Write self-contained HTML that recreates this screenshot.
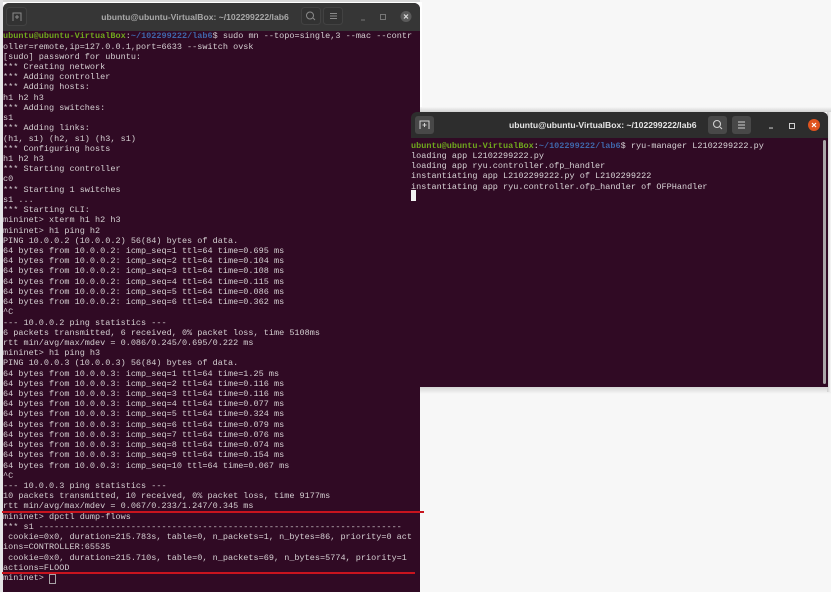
<!DOCTYPE html>
<html><head><meta charset="utf-8">
<style>
html,body{margin:0;padding:0;background:#fff;width:831px;height:592px;overflow:hidden}
.win{position:absolute;overflow:hidden;background:#300a24}
.bar{position:absolute;left:0;top:0;right:0}
.title{position:absolute;left:-33px;right:0;text-align:center;font:bold 8.6px/1 "Liberation Sans",sans-serif;filter:blur(.25px)}
pre{position:absolute;margin:0;font-family:"Liberation Mono",monospace;font-size:8.5px;letter-spacing:.012px;line-height:10.226px;color:#d4cfd1;filter:blur(.35px)}
.g{color:#6fa81e;font-weight:bold}.b{color:#3f66a8;font-weight:bold}
svg{position:absolute;left:0;top:0}
.red{position:absolute;background:#c8141e;height:1.5px}
</style></head><body>
<div style="position:absolute;left:0;top:0;width:831px;height:2px;background:#d8d8d8"></div>
<div style="position:absolute;left:0;top:0;width:3px;height:592px;background:#e4e4e6"></div>
<div style="position:absolute;left:420px;top:0;width:411px;height:592px;background:#f7f7f7"></div>
<div style="position:absolute;left:420px;top:2px;width:2px;height:105px;background:#fff"></div>

<div class="win" style="left:3px;top:3px;width:417px;height:589px;border-radius:6px 6px 0 0">
<div class="bar" style="height:27.5px;background:#363636"></div>
<div class="title" style="top:10px;color:#a8a8a8">ubuntu@ubuntu-VirtualBox: ~/102299222/lab6</div>
<svg width="417" height="28">
<rect x="3.5" y="4.5" width="20" height="18" rx="3" fill="#323232" stroke="#424242"/>
<path d="M10 18V10H18V18M14 12V16M12 14H16" fill="none" stroke="#8a8a8a"/>
<rect x="298.5" y="4.5" width="19" height="17" rx="3" fill="#323232" stroke="#424242"/>
<circle cx="307" cy="12.5" r="3.5" fill="none" stroke="#8a8a8a"/><path d="M310 15L312 17" stroke="#8a8a8a"/>
<rect x="320.5" y="4.5" width="19" height="17" rx="3" fill="#323232" stroke="#424242"/>
<path d="M327 10.5H334M327 13H334M327 15.5H334" stroke="#8a8a8a"/>
<path d="M358 17H362" stroke="#777"/>
<rect x="377.5" y="11.5" width="5" height="5" fill="none" stroke="#777"/>
<circle cx="403" cy="13.5" r="5.5" fill="#5a5a5a"/>
<path d="M401 11.5L405 15.5M405 11.5L401 15.5" stroke="#ddd" stroke-width="1.2"/>
</svg>
<pre style="left:0;top:28.4px"><span class="g">ubuntu@ubuntu-VirtualBox</span>:<span class="b">~/102299222/lab6</span>$ sudo mn --topo=single,3 --mac --contr
oller=remote,ip=127.0.0.1,port=6633 --switch ovsk
[sudo] password for ubuntu:
*** Creating network
*** Adding controller
*** Adding hosts:
h1 h2 h3
*** Adding switches:
s1
*** Adding links:
(h1, s1) (h2, s1) (h3, s1)
*** Configuring hosts
h1 h2 h3
*** Starting controller
c0
*** Starting 1 switches
s1 ...
*** Starting CLI:
mininet&gt; xterm h1 h2 h3
mininet&gt; h1 ping h2
PING 10.0.0.2 (10.0.0.2) 56(84) bytes of data.
64 bytes from 10.0.0.2: icmp_seq=1 ttl=64 time=0.695 ms
64 bytes from 10.0.0.2: icmp_seq=2 ttl=64 time=0.104 ms
64 bytes from 10.0.0.2: icmp_seq=3 ttl=64 time=0.108 ms
64 bytes from 10.0.0.2: icmp_seq=4 ttl=64 time=0.115 ms
64 bytes from 10.0.0.2: icmp_seq=5 ttl=64 time=0.086 ms
64 bytes from 10.0.0.2: icmp_seq=6 ttl=64 time=0.362 ms
^C
--- 10.0.0.2 ping statistics ---
6 packets transmitted, 6 received, 0% packet loss, time 5108ms
rtt min/avg/max/mdev = 0.086/0.245/0.695/0.222 ms
mininet&gt; h1 ping h3
PING 10.0.0.3 (10.0.0.3) 56(84) bytes of data.
64 bytes from 10.0.0.3: icmp_seq=1 ttl=64 time=1.25 ms
64 bytes from 10.0.0.3: icmp_seq=2 ttl=64 time=0.116 ms
64 bytes from 10.0.0.3: icmp_seq=3 ttl=64 time=0.116 ms
64 bytes from 10.0.0.3: icmp_seq=4 ttl=64 time=0.077 ms
64 bytes from 10.0.0.3: icmp_seq=5 ttl=64 time=0.324 ms
64 bytes from 10.0.0.3: icmp_seq=6 ttl=64 time=0.079 ms
64 bytes from 10.0.0.3: icmp_seq=7 ttl=64 time=0.076 ms
64 bytes from 10.0.0.3: icmp_seq=8 ttl=64 time=0.074 ms
64 bytes from 10.0.0.3: icmp_seq=9 ttl=64 time=0.154 ms
64 bytes from 10.0.0.3: icmp_seq=10 ttl=64 time=0.067 ms
^C
--- 10.0.0.3 ping statistics ---
10 packets transmitted, 10 received, 0% packet loss, time 9177ms
rtt min/avg/max/mdev = 0.067/0.233/1.247/0.345 ms
mininet&gt; dpctl dump-flows
*** s1 -----------------------------------------------------------------------
 cookie=0x0, duration=215.783s, table=0, n_packets=1, n_bytes=86, priority=0 act
ions=CONTROLLER:65535
 cookie=0x0, duration=215.710s, table=0, n_packets=69, n_bytes=5774, priority=1
actions=FLOOD
mininet&gt; </pre>
<div style="position:absolute;left:45.5px;top:570.5px;width:5px;height:8px;border:1px solid #a8a2a6"></div>
</div>

<div style="position:absolute;left:420px;top:386px;width:411px;height:8px;background:linear-gradient(#cfcfcf,#f7f7f7)"></div>
<div style="position:absolute;left:827px;top:112px;width:4px;height:280px;background:linear-gradient(90deg,#cfcfcf,#f7f7f7)"></div>
<div style="position:absolute;left:420px;top:107px;width:411px;height:5px;background:linear-gradient(#f7f7f7,#d0d0d0)"></div>

<div class="win" style="left:411px;top:112px;width:416.5px;height:274.5px;border-radius:6px 6px 0 0">
<div class="bar" style="height:26px;background:#2d2d2d"></div>
<div class="title" style="top:8.5px;color:#e6e6e6">ubuntu@ubuntu-VirtualBox: ~/102299222/lab6</div>
<svg width="417" height="26">
<rect x="4" y="4" width="19" height="18" rx="3" fill="#484848"/>
<path d="M9 17V9H18V17M13.5 11V15M11.5 13H15.5" fill="none" stroke="#cfcfcf"/>
<rect x="297" y="4" width="19" height="18" rx="3" fill="#484848"/>
<circle cx="306" cy="12" r="3.5" fill="none" stroke="#d0d0d0" stroke-width="1.1"/><path d="M309 15L311 17" stroke="#d0d0d0" stroke-width="1.1"/>
<rect x="321" y="4" width="19" height="18" rx="3" fill="#484848"/>
<path d="M327 10H334M327 13H334M327 16H334" stroke="#d0d0d0"/>
<path d="M358 16H362" stroke="#c8c8c8" stroke-width="1.1"/>
<rect x="378.5" y="11.5" width="5" height="5" fill="none" stroke="#d0d0d0"/>
<circle cx="403" cy="13" r="6" fill="#e0541f"/>
<path d="M401 11L405 15M405 11L401 15" stroke="#fff" stroke-width="1.2"/>
</svg>
<pre style="left:0;top:28.7px;color:#d8d4d6"><span class="g">ubuntu@ubuntu-VirtualBox</span>:<span class="b">~/102299222/lab6</span>$ ryu-manager L2102299222.py
loading app L2102299222.py
loading app ryu.controller.ofp_handler
instantiating app L2102299222.py of L2102299222
instantiating app ryu.controller.ofp_handler of OFPHandler</pre>
<div style="position:absolute;left:0;top:78px;width:5px;height:10.5px;background:#f2f2f2"></div>
<div style="position:absolute;left:411.5px;top:28px;width:3.5px;height:244px;background:#aaa6a8;border-radius:2px"></div>
</div>

<div class="red" style="left:2px;top:511.3px;width:422px"></div>
<div class="red" style="left:2px;top:572px;width:413px"></div>
</body></html>
